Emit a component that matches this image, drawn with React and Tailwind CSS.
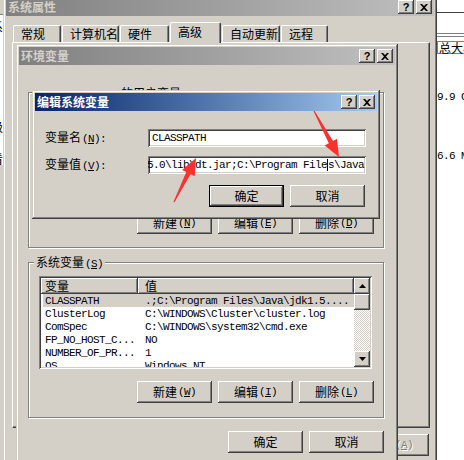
const RAISED = 'bg-[#d4d0c8] shadow-[inset_-1px_-1px_#404040,inset_1px_1px_#ffffff,inset_-2px_-2px_#808080]'
const DEFAULT_BTN = 'bg-[#d4d0c8] shadow-[inset_0_0_0_1px_#000000,inset_-2px_-2px_#404040,inset_2px_2px_#ffffff,inset_-3px_-3px_#808080]'
const SUNKEN = 'shadow-[inset_1px_1px_#808080,inset_-1px_-1px_#ffffff,inset_2px_2px_#404040,inset_-2px_-2px_#d4d0c8]'
const FRAME = 'bg-[#d4d0c8] p-[3px] shadow-[inset_-1px_-1px_#404040,inset_1px_1px_#d4d0c8,inset_-2px_-2px_#808080,inset_2px_2px_#ffffff]'
const MONO = "font-['Liberation_Mono',monospace] text-[11px] tracking-[-0.6px]"

const systemVars = [
  ['CLASSPATH', '.;C:\\Program Files\\Java\\jdk1.5....', true],
  ['ClusterLog', 'C:\\WINDOWS\\Cluster\\cluster.log'],
  ['ComSpec', 'C:\\WINDOWS\\system32\\cmd.exe'],
  ['FP_NO_HOST_C...', 'NO'],
  ['NUMBER_OF_PR...', '1'],
  ['OS', 'Windows NT'],
]

export default function App() {
  return (
    <div className="relative w-[464px] h-[460px] overflow-hidden bg-[#d4d0c8] text-black text-[12px] leading-[12px] font-['Noto_Sans_CJK_SC',sans-serif]">

      {/* window peeking on the left */}
      <div className="absolute left-0 top-0 w-[4px] h-full flex flex-col overflow-hidden">
        <div className="h-[14px]" />
        <div className="h-px bg-[#808080]" />
        <div className="h-[150px] bg-white flex flex-col overflow-hidden">
          <span className="mt-[6px] -ml-[9px] whitespace-nowrap">系</span>
          <span className="mt-[88px] -ml-[9px] whitespace-nowrap">级</span>
          <span className="mt-[20px] -ml-[9px] whitespace-nowrap">看</span>
        </div>
      </div>

      {/* window peeking on the right */}
      <div className="absolute left-[437px] top-0 w-[27px] h-full bg-white flex flex-col overflow-hidden">
        <div className="h-[12px]" />
        <div className="h-px bg-[#404040]" />
        <div className="h-[20px]" />
        <div className="h-px bg-[#808080]" />
        <div className="h-[2px]" />
        <div className="h-px bg-[#808080]" />
        <div className="mt-[4px] h-[13px] border-t border-b border-l border-[#808080] whitespace-nowrap pl-[1px] leading-[12px]">总大小</div>
        <span className={`${MONO} mt-[37px] whitespace-nowrap`}>9.9 GB</span>
        <span className={`${MONO} mt-[47px] whitespace-nowrap`}>6.6 MB</span>
      </div>

      <SystemProps />
      <EnvVars />
      <EditVar />

      {/* red callout arrows */}
      <svg className="absolute left-0 top-0" width="464" height="460">
        <polygon points={arrow(174, 202, 196, 158)} fill="#f8332f" />
        <polygon points={arrow(314, 111, 339, 157)} fill="#f8332f" />
      </svg>
    </div>
  )
}

function arrow(tx, ty, px, py, head = 17, wing = 7, neck = 2.4) {
  const len = Math.hypot(px - tx, py - ty)
  const ux = (px - tx) / len, uy = (py - ty) / len
  const nx = -uy, ny = ux
  const bx = px - ux * head, by = py - uy * head
  return [
    [tx + nx * 0.6, ty + ny * 0.6],
    [bx + nx * neck, by + ny * neck],
    [bx + nx * wing, by + ny * wing],
    [px, py],
    [bx - nx * wing, by - ny * wing],
    [bx - nx * neck, by - ny * neck],
    [tx - nx * 0.6, ty - ny * 0.6],
  ].map(p => p.map(v => v.toFixed(1)).join(',')).join(' ')
}

function SystemProps() {
  const tabs = [['常规', 'w-[48px]'], ['计算机名', 'w-[57px]'], ['硬件', 'w-[49px]'], ['高级', 'w-[51px]', true], ['自动更新', 'w-[58px]'], ['远程', 'w-[47px]']]
  return (
    <div className={`absolute left-[3px] -top-[5px] w-[434px] h-[480px] ${FRAME}`}>
      <TitleBar title="系统属性" />
      <div className="flex items-end h-[20px] mt-[6px] ml-[7px] gap-px">
        {tabs.map(([t, w, sel]) => (
          <div key={t}
            className={`${w} ${sel ? 'h-[21px] -mb-px relative z-10 pt-[3px]' : 'h-[17px] pt-[2px]'} bg-[#d4d0c8] pl-[7px] whitespace-nowrap rounded-t-[2px] border-t border-l border-white border-r border-r-[#404040] shadow-[inset_-1px_0_#808080]`}>
            {t}
          </div>
        ))}
      </div>
      <div className="ml-[6px] w-[418px] h-[386px] border border-white border-r-[#404040] border-b-[#404040] shadow-[inset_-1px_-1px_#808080]" />
      <div className="flex justify-end gap-[6px] mt-[6px] pr-[5px]">
        <Btn>确定</Btn>
        <Btn>取消</Btn>
        <Btn disabled>应用<Mn k="A" /></Btn>
      </div>
    </div>
  )
}

function EnvVars() {
  return (
    <div className={`absolute left-[16px] top-[44px] w-[382px] h-[430px] ${FRAME}`}>
      <TitleBar title="环境变量" />

      <Group label={<>的用户变量<Mn k="U" /></>} labelPos="left-[90px] -top-[6px]" className="mt-[27px]">
        <div className="flex-1" />
        <div className="flex justify-end gap-[6px] pr-[9px] pb-[13px]">
          <Btn>新建<Mn k="N" /></Btn>
          <Btn>编辑<Mn k="E" /></Btn>
          <Btn>删除<Mn k="D" /></Btn>
        </div>
      </Group>

      <Group label={<>系统变量<Mn k="S" /></>} className="mt-[14px]">
        <div className="pt-[13px] pl-[10px]">
          <VarList />
        </div>
        <div className="flex justify-end gap-[6px] pr-[9px] mt-[12px]">
          <Btn>新建<Mn k="W" /></Btn>
          <Btn>编辑<Mn k="I" /></Btn>
          <Btn>删除<Mn k="L" /></Btn>
        </div>
      </Group>

      <div className="flex justify-end gap-[6px] mt-[13px] pr-[11px]">
        <Btn>确定</Btn>
        <Btn>取消</Btn>
      </div>
    </div>
  )
}

function EditVar() {
  return (
    <div className={`absolute left-[32px] top-[90px] w-[348px] h-[129px] ${FRAME}`}>
      <TitleBar title="编辑系统变量" active />
      <div className="flex items-center mt-[18px] pl-[10px]">
        <span className="w-[103px] whitespace-nowrap">变量名<Mn k="N" /><span className={MONO}>:</span></span>
        <div className={`w-[218px] h-[18px] bg-white pl-[4px] flex items-center ${SUNKEN}`}>
          <span className={MONO}>CLASSPATH</span>
        </div>
      </div>
      <div className="flex items-center mt-[9px] pl-[10px]">
        <span className="w-[103px] whitespace-nowrap">变量值<Mn k="V" /><span className={MONO}>:</span></span>
        <div className={`w-[218px] h-[18px] bg-white p-[2px] flex items-center justify-end overflow-hidden ${SUNKEN}`}>
          <span className={`${MONO} whitespace-nowrap`}>
            jdk1.5.0\lib\dt.jar;C:\Program File<span className="inline-block w-0 h-[12px] border-l border-black align-middle" />s\Java
          </span>
        </div>
      </div>
      <div className="flex justify-end gap-[6px] mt-[11px] pr-[12px]">
        <Btn def>确定</Btn>
        <Btn>取消</Btn>
      </div>
    </div>
  )
}

function VarList() {
  return (
    <div className={`w-[333px] h-[93px] bg-white p-[2px] ${SUNKEN}`}>
      <div className="flex h-full overflow-hidden">
        <div className="flex-1 flex flex-col overflow-hidden">
          <div className="flex h-[16px] shrink-0">
            <div className={`w-[97px] pl-[4px] pt-[2px] ${RAISED}`}>变量</div>
            <div className={`flex-1 pl-[7px] pt-[2px] ${RAISED}`}>值</div>
          </div>
          {systemVars.map(([name, value, sel]) => (
            <div key={name} className={`flex h-[13px] shrink-0 ml-[2px] items-center whitespace-nowrap ${sel ? 'bg-[#d4d0c8]' : ''}`}>
              <span className={`${MONO} w-[95px] pl-[2px]`}>{name}</span>
              <span className={`${MONO} pl-[7px]`}>{value}</span>
            </div>
          ))}
        </div>
        <div className="w-[16px] flex flex-col">
          <div className={`h-[16px] flex items-center justify-center ${RAISED}`}>
            <svg width="7" height="4"><polygon points="3.5,0 7,4 0,4" fill="#000" /></svg>
          </div>
          <div className={`h-[16px] ${RAISED}`} />
          <div className="flex-1 bg-[repeating-conic-gradient(#ffffff_0_25%,#d4d0c8_0_50%)] bg-[length:2px_2px]" />
          <div className={`h-[16px] flex items-center justify-center ${RAISED}`}>
            <svg width="7" height="4"><polygon points="0,0 7,0 3.5,4" fill="#000" /></svg>
          </div>
        </div>
      </div>
    </div>
  )
}

function Group({ label, labelPos = 'left-[5px] -top-[7px]', className = '', children }) {
  return (
    <div className={`relative ml-[9px] w-[356px] h-[156px] flex flex-col border border-[#808080] shadow-[inset_1px_1px_#ffffff,1px_1px_#ffffff] ${className}`}>
      <span className={`absolute ${labelPos} px-[2px] bg-[#d4d0c8] whitespace-nowrap leading-[12px]`}>{label}</span>
      {children}
    </div>
  )
}

function TitleBar({ title, active }) {
  return (
    <div className={`flex items-center h-[18px] pl-[2px] pr-[2px] ${active ? 'bg-linear-to-r from-[#0a246a] to-[#a6caf0] text-white' : 'bg-linear-to-r from-[#808080] to-[#c0c0c0] text-[#d4d0c8]'}`}>
      <span className="flex-1 font-bold whitespace-nowrap">{title}</span>
      <div className={`w-[16px] h-[14px] flex items-center justify-center text-black font-bold text-[11px] leading-none font-['Liberation_Sans',sans-serif] ${RAISED}`}>?</div>
      <div className={`w-[16px] h-[14px] ml-[2px] flex items-center justify-center ${RAISED}`}>
        <svg width="8" height="7" viewBox="0 0 8 7"><path d="M0 0h2l2 2 2-2h2L5 3.5 8 7H6L4 5 2 7H0l3-3.5z" fill="#000" /></svg>
      </div>
    </div>
  )
}

function Btn({ children, def, disabled }) {
  return (
    <div className={`w-[75px] h-[22px] shrink-0 flex items-center justify-center whitespace-nowrap leading-[12px] ${def ? DEFAULT_BTN : RAISED} ${disabled ? 'text-[#808080] [text-shadow:1px_1px_0_#ffffff]' : 'text-black'}`}>
      {children}
    </div>
  )
}

function Mn({ k }) {
  return <span className={`${MONO} ml-[1px]`}>(<span className="underline">{k}</span>)</span>
}
